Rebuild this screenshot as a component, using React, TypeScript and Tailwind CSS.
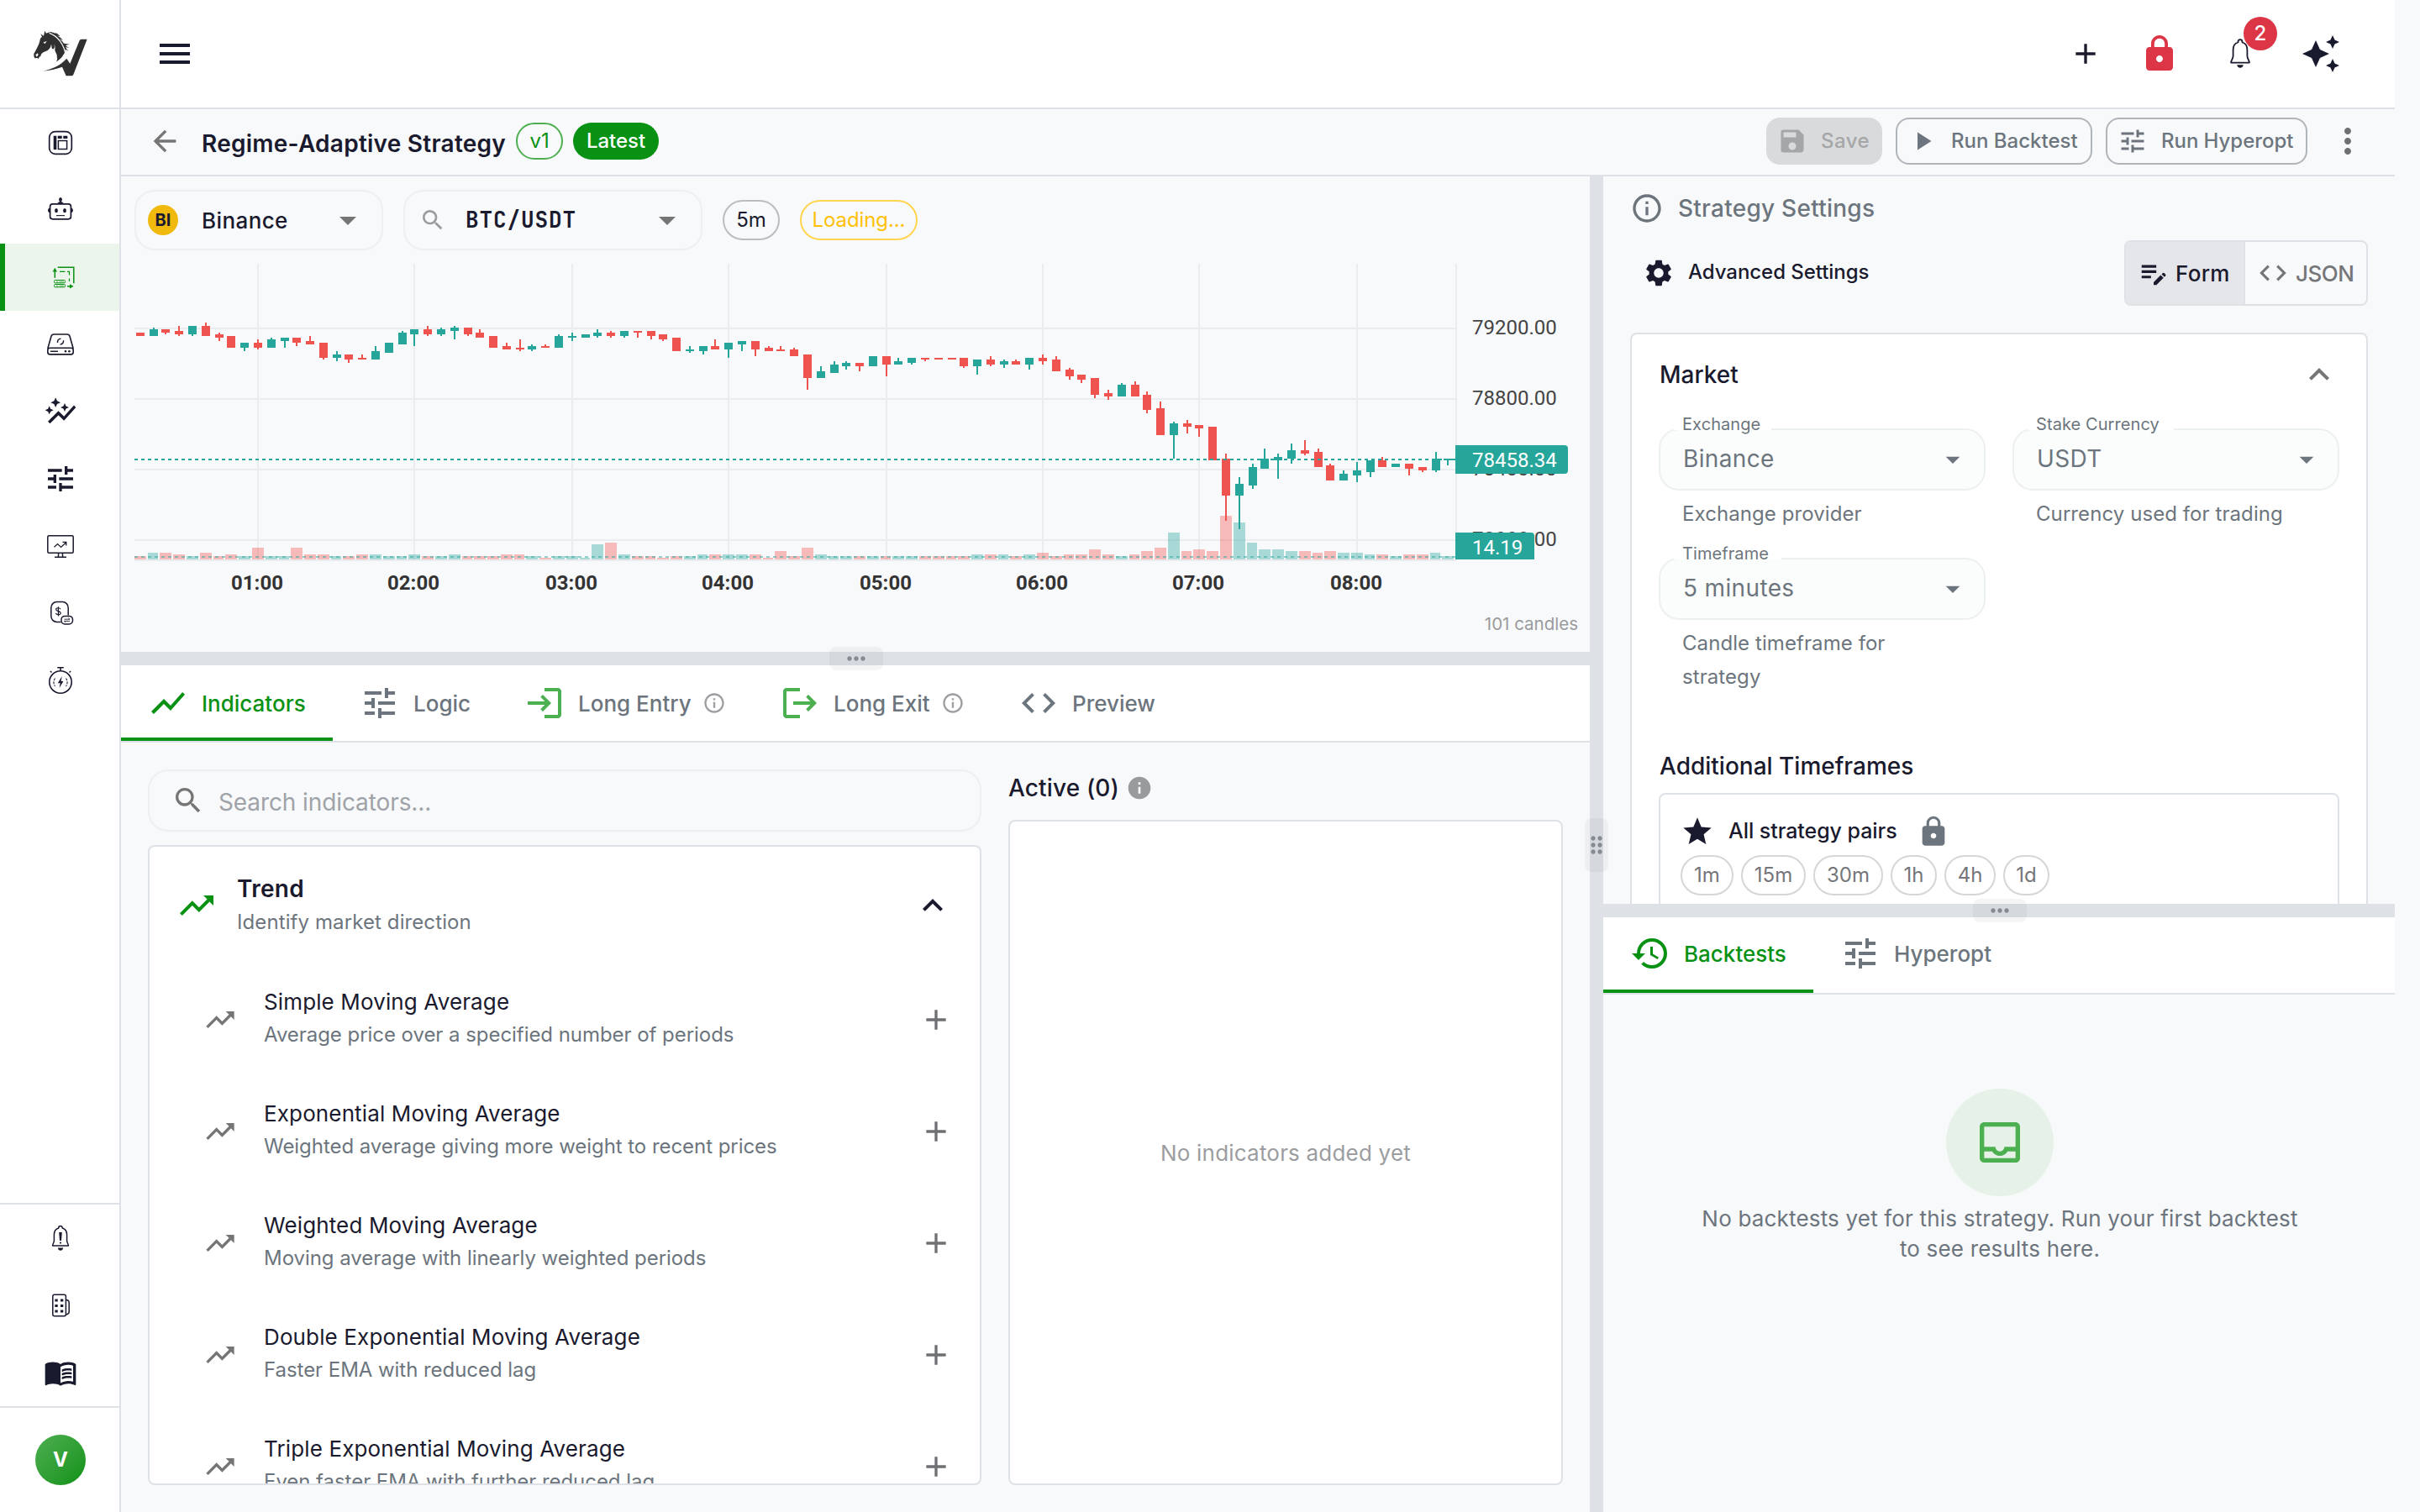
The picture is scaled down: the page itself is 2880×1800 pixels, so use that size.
import React from "react";
import {
  MdAdd,
  MdArrowBack,
  MdArrowDropDown,
  MdAutoAwesome,
  MdAutoGraph,
  MdCode,
  MdDragIndicator,
  MdEditNote,
  MdExpandLess,
  MdHistory,
  MdInfo,
  MdLock,
  MdLogin,
  MdLogout,
  MdMenu,
  MdMenuBook,
  MdMoreHoriz,
  MdMoreVert,
  MdOutlineInbox,
  MdOutlineInfo,
  MdPlayArrow,
  MdSave,
  MdSearch,
  MdSettings,
  MdShowChart,
  MdStar,
  MdTrendingUp,
  MdTune,
} from "react-icons/md";

/* ---------- Custom glyphs ---------- */

function Logo() {
  return (
    <svg viewBox="24 42 204 174" className="w-[68px] h-[58px]" fill="#303030">
      <path d="M70 47 L75 56 L82 53 C94 53 101 58 108 64 C124 76 136 92 141 112 C143 122 141 128 136 133 C132 142 124 150 110 158 C114 151 116 147 113 140 C116 132 108 126 106 116 C107 108 107 100 103 94 C107 106 103 114 97 112 C93 107 95 100 93 95 C91 108 84 116 72 121 C60 125 57 130 55 138 L50 140 L48 147 L43 144 L34 145 L31 138 L31 128 C37 120 42 108 48 96 C51 88 53 80 54 74 L60 68 L55 58 L66 65 Z" />
      <path d="M82 50 C92 50 102 53 110 58 L106 53 C113 55 120 60 124 67 L114 64 C124 70 130 75 134 81 L122 76 C130 82 134 86 138 92 L158 95 L144 99 C148 104 152 106 158 107 L144 106 C148 113 151 116 154 119 L143 113 L145 126 C139 98 124 68 82 50 Z" />
      <path d="M86 55 C116 66 138 94 144 132" stroke="#fff" strokeWidth="3.5" fill="none" />
      <path d="M63 191 C96 184 126 170 148 146 L160 164 L193 84 C195 79 197 77 201 77 L221 77 L172 203 C170 207 168 208 165 208 L146 208 L132 176 C110 184 86 188 63 191 Z" />
      <path d="M64 89 L77 83 L71 93 Z" fill="#fff" />
      <path d="M37 133 L44 127 L47 133 L41 140 Z" fill="#fff" />
    </svg>
  );
}

const glyph = "w-[40px] h-[40px] shrink-0";

function DashboardGlyph() {
  return (
    <svg viewBox="-20 -20 40 40" className={glyph} fill="none" stroke="#1a1a2e" strokeWidth="1.7">
      <rect x="-13.3" y="-13.3" width="26.6" height="26.6" rx="7" />
      <rect x="-8.3" y="-8.3" width="3.6" height="16.4" fill="#1a1a2e" stroke="none" />
      <rect x="-3.3" y="-8.3" width="5" height="3.3" fill="#1a1a2e" stroke="none" />
      <rect x="3.3" y="-8.3" width="5" height="3.3" fill="#1a1a2e" stroke="none" />
      <rect x="-2.6" y="-2.5" width="10.2" height="10" strokeWidth="1.5" />
    </svg>
  );
}

function RobotGlyph() {
  return (
    <svg viewBox="-20 -20 40 40" className={glyph} fill="none" stroke="#1a1a2e" strokeWidth="1.7">
      <rect x="-12.4" y="-7.2" width="24.8" height="18" rx="3" />
      <path d="M-3.4 -7.5 C-3 -10 3 -10 3.4 -7.5 Z M-0.9 -10 h1.8" fill="#1a1a2e" strokeWidth="1" />
      <ellipse cx="0" cy="-12.5" rx="1.9" ry="2.6" fill="#1a1a2e" stroke="none" />
      <path d="M-13 -2.2 c-2.6 .4 -2.6 5 0 5.4z M13 -2.2 c2.6 .4 2.6 5 0 5.4z" fill="#1a1a2e" stroke="none" />
      <ellipse cx="-5" cy="0.7" rx="1.9" ry="2.6" fill="#1a1a2e" stroke="none" />
      <ellipse cx="5" cy="0.7" rx="1.9" ry="2.6" fill="#1a1a2e" stroke="none" />
      <path d="M-5 6.6 H5" strokeWidth="1.1" />
    </svg>
  );
}

function StrategyGlyph() {
  return (
    <svg viewBox="-20 -20 40 40" className={glyph} fill="none" stroke="#089113" strokeWidth="1.5">
      <path d="M-6.7 0.8 V-8" />
      <path d="M-9.4 -6.6 L-6.7 -11.2 L-4 -6.6 Z" fill="#089113" stroke="none" />
      <path d="M-3.3 -11.7 H15.8 V7.3" />
      <path d="M-1 -6.6 H5.4 M8 -6.6 H10.5 V-2.6 M10.5 1.6 V5" strokeWidth="1.2" />
      <rect x="-7.5" y="3.5" width="13" height="3.3" rx="1" strokeWidth="1" />
      <rect x="-7.5" y="8.5" width="13" height="3.3" rx="1" strokeWidth="1" />
      <path d="M-5 5.2 h2 M-1.5 5.2 h5.5 M-5 10.2 h2 M-1.5 10.2 h5.5" strokeWidth="0.6" />
      <path d="M8 10.8 H12" />
      <path d="M11 8.2 L15.6 10.8 L11 13.4 Z" fill="#089113" stroke="none" />
    </svg>
  );
}

function DriveGlyph() {
  return (
    <svg viewBox="-20 -20 40 40" className={glyph} fill="none" stroke="#1a1a2e" strokeWidth="1.6" strokeLinejoin="round">
      <path d="M-15.2 5 L-11 -9.8 Q-10.3 -12 -8 -12 H8 Q10.3 -12 11 -9.8 L15.2 5" />
      <rect x="-15.2" y="4.3" width="30.4" height="7.6" rx="2.6" />
      <path d="M-3.4 -2 A3.8 3.8 0 0 1 0.4 -6.8 M3.4 -4.8 A3.8 3.8 0 0 1 -0.4 0" strokeWidth="1.5" />
      <path d="M-12 8.3 H-3" strokeWidth="1.5" />
      <circle cx="6" cy="8.3" r="1.3" fill="#1a1a2e" stroke="none" />
      <circle cx="10.4" cy="8.3" r="1.3" fill="#1a1a2e" stroke="none" />
    </svg>
  );
}

function MonitorGlyph() {
  return (
    <svg viewBox="-20 -20 40 40" className={glyph} fill="none" stroke="#1a1a2e" strokeWidth="1.5">
      <rect x="-15.2" y="-12.3" width="30.4" height="20.6" rx="1.5" />
      <path d="M-2.5 8.3 V13 M2.5 8.3 V13 M-7 13.3 H7" />
      <path d="M-7.5 1.2 L-3.5 -2.4 L0.6 1.4 L6.5 -4.2 M2.5 -4.6 H6.8 V-0.6" strokeWidth="1.3" />
    </svg>
  );
}

function MoneyGlyph() {
  return (
    <svg viewBox="-20 -20 40 40" className={glyph} fill="none" stroke="#1a1a2e" strokeWidth="1.5">
      <path d="M0.5 10.4 H-4.5 A6.8 6.8 0 0 1 -11.2 3.6 V-6.6 A6.8 6.8 0 0 1 -4.5 -13.4 H2.5 A6.8 6.8 0 0 1 9.2 -6.6 V2.6" />
      <rect x="1" y="3.4" width="13.5" height="9.6" rx="4.2" />
      <path d="M4.5 7.2 H11 L9.4 5.8 M11 9.4 H4.5 L6 10.8" strokeWidth="0.9" />
      <path d="M0 -4.8 C-1 -7 -5.5 -6.600 -5.300 -4.200 C-5 -1.800 0 -2.800 0.200 -0.200 C0.300 2.300 -4.800 2.300 -5.600 0 M-2.600 -7.800 V3.600" strokeWidth="1.2" />
    </svg>
  );
}

function StopwatchGlyph() {
  return (
    <svg viewBox="-20 -20 40 40" className={glyph} fill="none" stroke="#1a1a2e" strokeWidth="1.6">
      <circle cx="0" cy="2" r="13.2" />
      <path d="M-3.8 -15.2 H3.8 M0 -15 V-11.5 M-10.5 -9.5 l-1.6 -1.5 M10.5 -9.5 l1.6 -1.5" />
      <path d="M-6.5 -2.5 C-8.6 0.5 -8.6 4 -6.5 6.8 M6.5 -2.5 C8.6 0.5 8.6 4 6.5 6.8" strokeWidth="1.1" strokeDasharray="3 1.2" />
      <path d="M1.8 -5 L-3.2 3.2 H-0.3 L-1.4 9 L3.4 1 H0.6 Z" fill="#1a1a2e" stroke="none" />
    </svg>
  );
}

function BellAlertGlyph() {
  return (
    <svg viewBox="-20 -20 40 40" className={glyph} fill="none" stroke="#1a1a2e" strokeWidth="1.5" strokeLinejoin="round">
      <path d="M-2.3 -12 C-2.3 -15.3 2.3 -15.3 2.3 -12 C6 -11 7.6 -8 7.6 -4 V3 C7.6 5.5 9.4 6.5 9.4 9 H-9.4 C-9.4 6.5 -7.6 5.5 -7.6 3 V-4 C-7.6 -8 -6 -11 -2.3 -12 Z" />
      <path d="M-3.2 11.4 H3.2 C2.6 15.8 -2.6 15.8 -3.2 11.4 Z" fill="#1a1a2e" stroke="none" />
      <path d="M-1.8 -7 H1.8 L1 3 H-1 Z" fill="#1a1a2e" stroke="none" />
      <circle cx="0" cy="5.6" r="1.1" fill="#1a1a2e" stroke="none" />
    </svg>
  );
}

function BuildingGlyph() {
  return (
    <svg viewBox="-20 -20 40 40" className={glyph} fill="none" stroke="#1a1a2e" strokeWidth="1.5">
      <rect x="-9.2" y="-12.8" width="15.6" height="25.6" rx="2" />
      <path d="M6.6 -6.5 C9.5 -6.5 10.2 -4.5 10.2 -3 V7.5 C10.2 9.5 9 10.6 6.6 10.8" />
      <path d="M-6.6 -7.6 h3.3 v3 h-3.3z M0 -7.6 h3.3 v3 h-3.3z M-6.6 -1 h3.3 v3 h-3.3z M0 -1 h3.3 v3 h-3.3z M-6.6 5.6 h3.3 v3 h-3.3z M0 5.6 h3.3 v3 h-3.3z" fill="#1a1a2e" stroke="none" />
    </svg>
  );
}

function BellGlyph() {
  return (
    <svg viewBox="-20 -20 40 40" className="w-[40px] h-[40px]" fill="none" stroke="#1a1a2e" strokeWidth="1.8" strokeLinejoin="round">
      <path d="M-2.6 -13.5 C-2.6 -18 2.6 -18 2.6 -13.5 C6.6 -12.5 8.4 -9 8.4 -4.5 V2.5 C8.4 6 10.9 7.5 10.9 10.6 H-10.9 C-10.9 7.5 -8.4 6 -8.4 2.5 V-4.5 C-8.4 -9 -6.6 -12.5 -2.6 -13.5 Z" />
      <path d="M-3.8 13.2 H3.8 C3 18 -3 18 -3.8 13.2 Z" fill="#1a1a2e" stroke="none" />
    </svg>
  );
}

/* ---------- Price chart ---------- */

type Candle = [up: 0 | 1, high: number, top: number, bottom: number, low: number, volume: number];

const CANDLES: Candle[] = [
  [0, 41, 41, 43, 43, 2], [1, 38, 39, 43, 43, 4], [0, 39, 39, 41, 42, 4], [0, 37, 40, 42, 43, 3], [1, 37, 37, 42, 43, 2],
  [0, 35, 37, 43, 43, 4], [0, 41, 42, 44, 46, 2], [0, 43, 43, 50, 50, 3], [1, 47, 47, 50, 52, 2], [0, 45, 47, 50, 51, 7],
  [1, 44, 45, 50, 50, 2], [1, 44, 44, 46, 50, 2], [0, 44, 44, 47, 49, 7], [0, 43, 46, 48, 48, 3], [0, 47, 47, 56, 57, 3],
  [1, 52, 54, 56, 58, 2], [0, 54, 54, 57, 59, 2], [0, 54, 56, 57, 57, 3], [1, 49, 52, 57, 57, 3], [1, 47, 47, 53, 53, 2],
  [1, 40, 41, 48, 48, 2], [1, 39, 39, 42, 49, 3], [0, 37, 39, 42, 43, 2], [1, 38, 39, 42, 43, 2], [1, 37, 38, 40, 45, 3],
  [0, 38, 38, 42, 43, 2], [0, 39, 41, 44, 44, 2], [0, 43, 43, 50, 50, 2], [0, 47, 49, 51, 51, 3], [0, 45, 50, 51, 52, 3],
  [1, 48, 49, 51, 52, 2], [0, 48, 49, 50, 50, 1], [1, 42, 43, 50, 50, 2], [1, 41, 43, 44, 46, 2], [1, 42, 42, 44, 44, 1],
  [1, 39, 41, 43, 44, 9], [0, 40, 41, 43, 44, 10], [1, 40, 40, 43, 44, 3], [0, 40, 40, 41, 44, 2], [0, 40, 40, 43, 45, 2],
  [0, 42, 42, 45, 46, 1], [0, 44, 44, 52, 52, 2], [1, 49, 51, 52, 53, 2], [1, 49, 49, 52, 54, 3], [0, 45, 49, 51, 51, 3],
  [1, 47, 47, 51, 56, 3], [1, 46, 46, 48, 52, 3], [0, 46, 46, 51, 55, 3], [0, 49, 50, 52, 52, 1], [0, 49, 51, 52, 52, 5],
  [0, 50, 51, 55, 55, 2], [0, 54, 54, 68, 75, 7], [1, 61, 64, 68, 68, 3], [1, 58, 60, 65, 65, 2], [1, 58, 59, 61, 63, 2],
  [0, 59, 59, 61, 64, 2], [1, 55, 55, 61, 61, 2], [0, 55, 55, 60, 67, 2], [1, 56, 58, 60, 60, 2], [1, 56, 56, 59, 60, 2],
  [0, 56, 56, 57, 58, 2], [0, 56, 56, 57, 57, 2], [0, 56, 56, 57, 57, 2], [0, 56, 56, 61, 62, 2], [1, 57, 57, 61, 66, 3],
  [0, 55, 57, 60, 61, 3], [1, 57, 58, 60, 62, 3], [0, 57, 58, 60, 60, 2], [1, 56, 56, 60, 63, 3], [0, 54, 56, 58, 60, 4],
  [0, 55, 57, 64, 64, 2], [0, 62, 63, 67, 69, 3], [0, 66, 66, 69, 71, 3], [0, 68, 68, 78, 80, 6], [0, 75, 77, 79, 81, 3],
  [1, 71, 72, 79, 79, 2], [0, 70, 72, 79, 79, 3], [0, 76, 78, 87, 89, 5], [0, 82, 86, 102, 102, 7], [1, 94, 95, 102, 116, 16],
  [0, 93, 95, 97, 101, 5], [0, 96, 96, 98, 103, 6], [0, 97, 97, 117, 117, 5], [0, 113, 116, 138, 153, 26], [1, 127, 131, 138, 158, 22],
  [1, 119, 121, 132, 134, 10], [1, 110, 116, 122, 122, 6], [1, 113, 115, 117, 128, 6], [1, 107, 111, 116, 119, 5], [0, 105, 111, 113, 114, 5],
  [0, 110, 112, 121, 121, 4], [0, 119, 120, 129, 129, 5], [1, 123, 125, 129, 129, 4], [1, 118, 123, 126, 130, 4], [1, 117, 117, 124, 127, 3],
  [0, 115, 117, 121, 121, 3], [1, 119, 119, 121, 121, 2], [0, 119, 119, 122, 126, 3], [0, 121, 121, 123, 124, 3], [1, 112, 116, 123, 124, 4],
  [1, 116, 116, 117, 120, 2],
];

const HOURS = ["01:00", "02:00", "03:00", "04:00", "05:00", "06:00", "07:00", "08:00"];
const PRICES = ["79200.00", "78800.00", "78400.00", "78000.00"];

// Candle centre in chart units; one unit is two screen pixels.
const centre = (i: number) => 3.5 + Math.round(7.785 * i - 0.1);

function PriceChart() {
  return (
    <svg viewBox="0 0 858 201" className="w-[1716px] h-[402px] font-['Roboto',sans-serif]">
      <g stroke="#eaecef" strokeWidth="1">
        {HOURS.map((h, i) => (
          <path key={h} d={`M${centre(9 + 12 * i)} 0 V176`} />
        ))}
        {PRICES.map((p, i) => (
          <path key={p} d={`M0 ${38.5 + 42 * i} H786`} />
        ))}
        <path d="M786.5 0 V176.5 M0 176.5 H786.5" />
      </g>
      {CANDLES.map((c, i) => {
        const x = centre(i) - 3.5;
        const w = Math.min(centre(i + 1) - centre(i) - 1, 786 - x);
        return (
          <rect key={i} x={x} y={176 - c[5]} width={w} height={c[5]} fill={c[0] ? "#26a69a" : "#ef5350"} fillOpacity="0.38" />
        );
      })}
      <path d="M0 174.5 H786" stroke="#26a69a" strokeOpacity="0.5" strokeDasharray="2 2" />
      {CANDLES.map((c, i) => (
        <g key={i} fill={c[0] ? "#26a69a" : "#ef5350"}>
          <rect x={centre(i) - 0.5} y={c[1]} width="1" height={c[4] - c[1]} />
          <rect x={centre(i) - 2.5} y={c[2]} width="5" height={c[3] - c[2]} />
        </g>
      ))}
      <path d="M0 116.5 H786" stroke="#26a69a" strokeDasharray="2 2" />
      <g fontSize="12" fill="#444">
        {PRICES.map((p, i) => (
          <text key={p} x="796" y={42.2 + 42 * i}>
            {p}
          </text>
        ))}
      </g>
      <path d="M786 108 H851 a2 2 0 0 1 2 2 V123 a2 2 0 0 1 -2 2 H786 Z" fill="#26a69a" />
      <path d="M786 160 H831 a2 2 0 0 1 2 2 V176 H786 Z" fill="#26a69a" />
      <g fontSize="12" fill="#fff">
        <text x="796" y="121">78458.34</text>
        <text x="796" y="173">14.19</text>
      </g>
      <g fontSize="12" fontWeight="700" fill="#333" textAnchor="middle">
        {HOURS.map((h, i) => (
          <text key={h} x={centre(9 + 12 * i) - 0.5} y="194.2">
            {h}
          </text>
        ))}
      </g>
    </svg>
  );
}

/* ---------- Building blocks ---------- */

function HandleRow() {
  return (
    <div className="relative z-10 h-4 shrink-0 bg-[#dee2e6] pl-px flex justify-center items-center">
      <div className="w-[64px] h-[28px] shrink-0 rounded-lg bg-black/[0.04] flex items-center justify-center">
        <MdMoreHoriz className="size-8 text-[#868b91]" />
      </div>
    </div>
  );
}

function HandleColumn() {
  return (
    <div className="relative z-10 w-4 shrink-0 bg-[#dee2e6] pt-[2px] flex justify-center items-center">
      <div className="w-[28px] h-[64px] shrink-0 rounded-lg bg-black/[0.04] flex items-center justify-center">
        <MdDragIndicator className="size-8 shrink-0 text-[#868b91]" />
      </div>
    </div>
  );
}

function Tab({ icon, label, active, info, size }: { icon: React.ReactNode; label: string; active?: boolean; info?: boolean; size: string }) {
  return (
    <div className={`${size} h-full shrink-0 pl-8 flex items-center border-b-4 ${active ? "border-[#089113] text-[#089113]" : "border-transparent text-[#6c757d]"}`}>
      {icon}
      <span className="ml-4 pt-px text-[26px] font-medium whitespace-nowrap">{label}</span>
      {info && <MdOutlineInfo className="ml-[13px] size-7 text-[#9b9da0]" />}
    </div>
  );
}

const NAV = [DashboardGlyph, RobotGlyph, StrategyGlyph, DriveGlyph, null, "tune", MonitorGlyph, MoneyGlyph, StopwatchGlyph] as const;

function Sidebar() {
  return (
    <aside className="w-[144px] shrink-0 bg-white border-r-2 border-[#dee2e6] flex flex-col">
      <div className="h-[130px] shrink-0 border-b-2 border-[#dee2e6] pl-[2px] flex items-center justify-center">
        <Logo />
      </div>
      <nav className="flex flex-col">
        {NAV.map((Item, i) => (
          <div key={i} className={`h-20 flex items-center justify-center ${i === 2 ? "bg-[#ebf5ec] border-l-[6px] border-[#089113] pr-[4px]" : "pl-[2px]"}`}>
            {Item === null ? (
              <MdAutoGraph className="size-10 text-[#1a1a2e]" />
            ) : Item === "tune" ? (
              <MdTune className="size-10 text-[#1a1a2e]" />
            ) : (
              <Item />
            )}
          </div>
        ))}
      </nav>
      <div className="mt-auto h-[242px] border-t-2 border-[#dee2e6] pl-[2px] flex flex-col items-center">
        <div className="h-20 flex items-center">
          <BellAlertGlyph />
        </div>
        <div className="h-20 flex items-center">
          <BuildingGlyph />
        </div>
        <div className="h-20 flex items-center">
          <MdMenuBook className="size-10 text-[#1a1a2e]" />
        </div>
      </div>
      <div className="h-[126px] shrink-0 border-t-2 border-[#dee2e6] pl-[2px] flex items-center justify-center">
        <div className="size-[60px] rounded-full bg-linear-to-br from-[#4caf50] to-[#089113] text-white text-[24px] font-bold flex items-center justify-center">V</div>
      </div>
    </aside>
  );
}

function TopBar() {
  return (
    <header className="h-[130px] shrink-0 bg-white border-b-2 border-[#dee2e6] flex items-center text-[#1a1a2e]">
      <MdMenu className="ml-10 size-12" />
      <MdAdd className="ml-auto size-10" />
      <MdLock className="ml-11 size-12 text-[#dc3545]" />
      <div className="relative ml-[52px]">
        <BellGlyph />
        <div className="absolute left-[24px] -top-[24px] size-10 rounded-full bg-[#dc3545] text-white text-[24px] font-medium flex items-center justify-center">2</div>
      </div>
      <MdAutoAwesome className="ml-[52px] mr-16 size-12" />
    </header>
  );
}

function StrategyBar() {
  return (
    <div className="h-[80px] shrink-0 pt-px pb-[3px] border-b-2 border-[#dee2e6] flex items-center">
      <MdArrowBack className="ml-8 size-10 text-[#757575]" />
      <h1 className="ml-6 text-[28px] font-semibold tracking-[0.25px] text-[#1a1a2e] pt-[5px]">Regime-Adaptive Strategy</h1>
      <span className="ml-3 w-[56px] h-11 rounded-full border-2 border-[#4caf50] text-[#089113] text-[24px] flex items-center justify-center">v1</span>
      <span className="ml-3 w-[102px] h-11 rounded-full bg-[#089113] text-white text-[24px] font-medium flex items-center justify-center">Latest</span>
      <div className="ml-auto flex items-center text-[24px] font-medium text-[#6c757d]">
        <button className="w-[138px] h-14 pl-[13px] rounded-2xl bg-[#d9dadc] text-[#a5a6a8] flex items-center tracking-[0.5px]">
          <MdSave className="size-9 mr-4" />
          Save
        </button>
        <button className="ml-4 w-[234px] h-14 pl-[12px] rounded-2xl border-2 border-[#afb5ba] flex items-center">
          <MdPlayArrow className="size-9 mr-4" />
          Run Backtest
        </button>
        <button className="ml-4 w-[240px] h-14 pl-[12px] rounded-2xl border-2 border-[#afb5ba] flex items-center tracking-[-0.05px]">
          <MdTune className="size-9 mr-4" />
          Run Hyperopt
        </button>
        <MdMoreVert className="ml-6 mr-8 size-12 text-[#6f7073]" />
      </div>
    </div>
  );
}

function ChartPanel() {
  return (
    <section className="h-[566px] shrink-0 pt-4 px-4 flex flex-col">
      <div className="h-[72px] flex items-center text-[#1a1a2e]">
        <div className="w-[296px] h-[72px] rounded-3xl border-2 border-[#edeff1] pl-[14px] pr-4 flex items-center">
          <div className="size-9 rounded-full bg-[#f0b90b] text-[20px] font-bold flex items-center justify-center">BI</div>
          <span className="ml-7 pt-px text-[26px] font-medium tracking-[0.4px]">Binance</span>
          <MdArrowDropDown className="ml-auto size-12 text-[#757575]" />
        </div>
        <div className="ml-6 w-[356px] h-[72px] rounded-3xl border-2 border-[#edeff1] pl-[17px] pr-4 flex items-center">
          <MdSearch className="size-8 text-[#9b9c9e]" />
          <span className="ml-[23px] pb-[2px] font-['JetBrains_Mono','Roboto_Mono','DejaVu_Sans_Mono',monospace] text-[26px] font-semibold tracking-[0.9px]">BTC/USDT</span>
          <MdArrowDropDown className="ml-auto size-12 text-[#757575]" />
        </div>
        <span className="ml-6 w-[68px] h-12 rounded-full border-2 border-[#bdbdbd] text-[24px] flex items-center justify-center">5m</span>
        <span className="ml-6 w-[140px] h-12 rounded-full border-2 border-[#ffd54f] text-[#ffc107] text-[24px] tracking-[-0.1px] flex items-center justify-center">Loading...</span>
      </div>
      <div className="mt-4">
        <PriceChart />
      </div>
      <div className="mt-[11px] -mr-[2px] text-right text-[20.5px] leading-[32px] text-[#9a9b9d]">101 candles</div>
    </section>
  );
}

const INDICATORS = [
  ["Simple Moving Average", "Average price over a specified number of periods"],
  ["Exponential Moving Average", "Weighted average giving more weight to recent prices"],
  ["Weighted Moving Average", "Moving average with linearly weighted periods"],
  ["Double Exponential Moving Average", "Faster EMA with reduced lag"],
  ["Triple Exponential Moving Average", "Even faster EMA with further reduced lag"],
];

function IndicatorsPanel() {
  return (
    <section className="flex-1 min-h-0 flex flex-col">
      <div className="h-[92px] shrink-0 bg-white border-b-2 border-[#dee2e6] flex [&>div]:pt-1">
        <Tab size="w-[252px]" active icon={<MdShowChart className="size-12" />} label="Indicators" />
        <Tab size="w-[196px]" icon={<MdTune className="size-12" />} label="Logic" />
        <Tab size="w-[304px]" icon={<MdLogin className="size-12 text-[#4caf50]" />} label="Long Entry" info />
        <Tab size="w-[284px]" icon={<MdLogout className="size-12 text-[#4caf50]" />} label="Long Exit" info />
        <Tab size="w-[230px]" icon={<MdCode className="size-12" />} label="Preview" />
      </div>
      <div className="flex-1 min-h-0 p-8 flex gap-8">
        <div className="w-[992px] min-h-0 flex flex-col">
          <div className="h-[74px] shrink-0 rounded-3xl border-2 border-[#edeff1] pl-[26px] flex items-center">
            <MdSearch className="size-10 text-[#757575]" />
            <span className="ml-4 pt-[3px] text-[28px] tracking-[-0.1px] text-[#9fa3a8]">Search indicators...</span>
          </div>
          <div className="mt-4 flex-1 min-h-0 overflow-hidden rounded-lg bg-white border-2 border-[#dee2e6]">
            <div className="h-[139px] pl-8 pr-8 flex items-center">
              <MdTrendingUp className="size-12 text-[#089113]" />
              <div className="ml-6 pt-px">
                <div className="text-[28px] leading-[40px] font-semibold tracking-[0.3px] text-[#1a1a2e]">Trend</div>
                <div className="text-[24px] leading-[40px] tracking-[0.1px] text-[#6c757d]">Identify market direction</div>
              </div>
              <MdExpandLess className="ml-auto size-12 text-[#1a1a2e]" />
            </div>
            {INDICATORS.map(([name, text]) => (
              <div key={name} className="h-[133px] pl-16 pr-8 flex items-center">
                <MdTrendingUp className="size-10 text-[#757575]" />
                <div className="ml-[32px] pb-[3px]">
                  <div className="text-[26px] leading-[40px] tracking-[0.13px] text-[#1a1a2e]">{name}</div>
                  <div className="text-[24px] leading-[38px] tracking-[-0.05px] text-[#6c757d]">{text}</div>
                </div>
                <MdAdd className="ml-auto size-10 text-[#6f7073]" />
              </div>
            ))}
          </div>
        </div>
        <div className="w-[660px] min-h-0 flex flex-col">
          <div className="h-11 mb-4 shrink-0 flex items-center">
            <span className="text-[28px] font-medium tracking-[0.15px] text-[#1a1a2e]">Active (0)</span>
            <MdInfo className="ml-2 size-8 text-[#999a9c]" />
          </div>
          <div className="flex-1 rounded-lg bg-white border-2 border-[#dee2e6] flex items-center justify-center text-[26px] tracking-[0.2px] text-[#9b9da0]">No indicators added yet</div>
        </div>
      </div>
    </section>
  );
}

function SelectField({ label, value, helper, notch }: { label: string; value: string; helper: string; notch: string }) {
  return (
    <div className="w-[389px]">
      <div className="relative h-[74px] rounded-3xl border-2 border-[#edf0f1] bg-[#fbfdfc] pl-[27px] pr-[17px] flex items-center text-[#6c757d]">
        <div className={`absolute -top-[2px] left-4 h-[2px] bg-white ${notch}`} />
        <span className="absolute -top-[23px] left-[26px] text-[20px] leading-[32px] tracking-[0.08px]">{label}</span>
        <span className="pb-[2px] text-[28px] tracking-[0.35px]">{value}</span>
        <MdArrowDropDown className="ml-auto size-10" />
      </div>
      <p className="mt-[8px] px-7 text-[24px] leading-[40px] tracking-[0.08px] text-[#6c757d]">{helper}</p>
    </div>
  );
}

const FRAMES = [
  ["1m", "w-[63px]"],
  ["15m", "w-[77px]"],
  ["30m", "w-[83px]"],
  ["1h", "w-[55px]"],
  ["4h", "w-[61px]"],
  ["1d", "w-[55px]"],
];

function SettingsPanel() {
  return (
    <section className="h-[866px] shrink-0 overflow-hidden px-8 flex flex-col text-[#1a1a2e]">
      <div className="mt-4 h-11 shrink-0 flex items-center text-[#6c757d]">
        <MdOutlineInfo className="size-10" />
        <span className="ml-[17px] text-[28px] font-medium tracking-[0.25px]">Strategy Settings</span>
      </div>
      <div className="mt-4 h-[78px] shrink-0 flex items-center">
        <MdSettings className="ml-[15px] mb-px size-[38px]" />
        <span className="ml-4 pb-[2px] text-[24px] font-medium tracking-[-0.05px]">Advanced Settings</span>
        <div className="ml-auto w-[290px] h-[78px] rounded-lg border-2 border-[#dee2e6] overflow-hidden flex text-[26px] font-medium">
          <div className="w-[142px] bg-[#e5e6ea] border-r-2 border-[#dee2e6] pl-[14px] flex items-center tracking-[0.3px]">
            <MdEditNote className="size-[38px] mr-[7px]" />
            Form
          </div>
          <div className="pl-[14px] flex items-center text-[#757679] tracking-[-0.5px]">
            <MdCode className="size-[38px] mr-2" />
            JSON
          </div>
        </div>
      </div>
      <div className="mt-8 flex-1 rounded-t-lg bg-white border-2 border-b-0 border-[#dee2e6] px-8">
        <div className="h-[112px] pt-3 flex justify-between items-start">
          <h2 className="ml-px text-[28px] leading-[73px] font-medium">Market</h2>
          <MdExpandLess className="mt-[12px] size-12 text-[#757575]" />
        </div>
        <div className="flex flex-wrap gap-x-8 gap-y-[32px]">
          <SelectField label="Exchange" value="Binance" helper="Exchange provider" notch="w-[116px]" />
          <SelectField label="Stake Currency" value="USDT" helper="Currency used for trading" notch="w-[174px]" />
          <SelectField label="Timeframe" value="5 minutes" helper="Candle timeframe for strategy" notch="w-[128px]" />
        </div>
        <h2 className="ml-px mt-[68px] text-[28px] leading-[36px] font-medium">Additional Timeframes</h2>
        <div className="mt-[14px] h-[200px] rounded-lg border-2 border-[#dee2e6] pl-6 pt-6">
          <div className="h-10 flex items-center">
            <MdStar className="size-10" />
            <span className="ml-[17px] text-[25px] font-medium tracking-[-0.05px]">All strategy pairs</span>
            <MdLock className="ml-[23px] size-10 text-[#6c757d]" />
          </div>
          <div className="mt-2 flex gap-[9px]">
            {FRAMES.map(([t, w]) => (
              <span key={t} className={`${w} h-12 rounded-full border-2 border-[#d5d6d8] text-[24px] text-[#75767a] flex items-center justify-center`}>
                {t}
              </span>
            ))}
          </div>
        </div>
      </div>
    </section>
  );
}

function ResultsPanel() {
  return (
    <section className="flex-1 min-h-0 flex flex-col">
      <div className="h-[92px] shrink-0 bg-white border-b-2 border-[#dee2e6] flex">
        <Tab size="w-[250px]" active icon={<MdHistory className="size-12" />} label="Backtests" />
        <Tab size="w-[246px]" icon={<MdTune className="size-12" />} label="Hyperopt" />
      </div>
      <div className="pt-[112px] pl-[2px] flex flex-col items-center">
        <div className="size-32 rounded-full bg-[#e6f1e8] flex items-center justify-center">
          <MdOutlineInbox className="size-16 text-[#4caf50]" />
        </div>
        <p className="mt-[9px] w-[720px] text-center text-[26px] leading-[36px] tracking-[0.18px] text-[#6c757d]">
          No backtests yet for this strategy. Run your first backtest to see results here.
        </p>
      </div>
    </section>
  );
}

export default function App() {
  return (
    <div className="w-[2880px] h-[1800px] overflow-hidden bg-[#f8f9fb] font-['Inter',sans-serif] flex">
      <Sidebar />
      <div className="w-[2706px] flex flex-col">
        <TopBar />
        <StrategyBar />
        <div className="flex-1 min-h-0 flex">
          <main className="w-[1748px] shrink-0 flex flex-col">
            <ChartPanel />
            <HandleRow />
            <IndicatorsPanel />
          </main>
          <HandleColumn />
          <aside className="w-[942px] flex flex-col">
            <SettingsPanel />
            <HandleRow />
            <ResultsPanel />
          </aside>
        </div>
      </div>
    </div>
  );
}
